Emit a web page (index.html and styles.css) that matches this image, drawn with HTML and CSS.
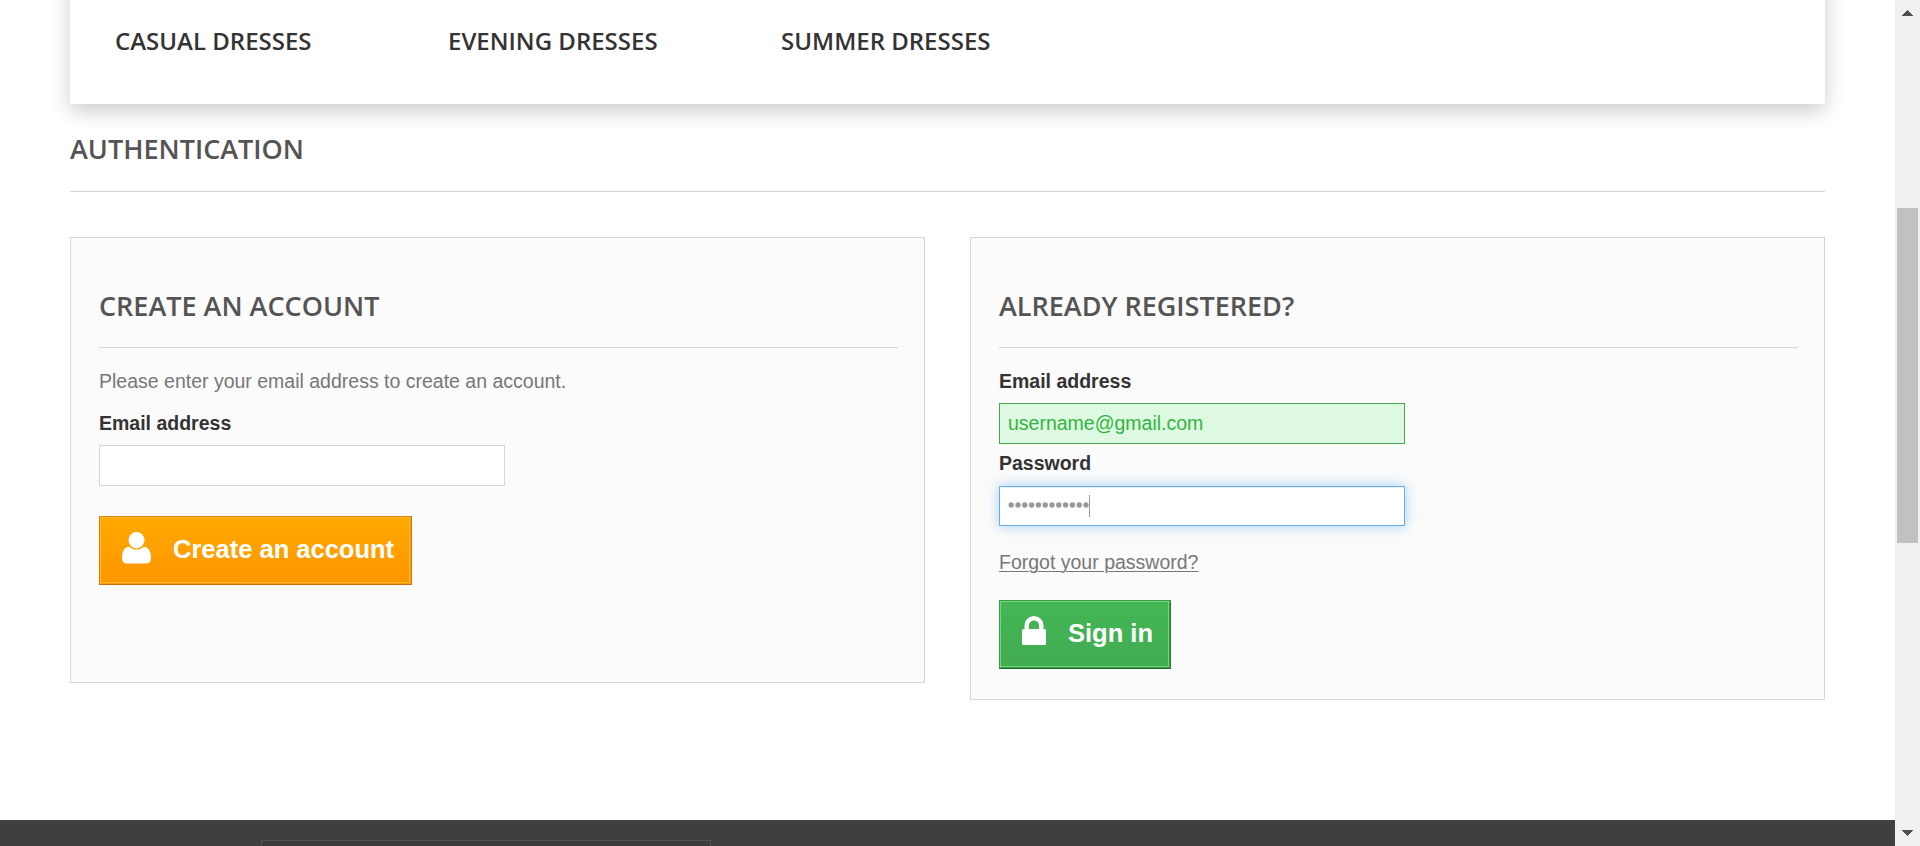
FILE: index.html
```html
<!DOCTYPE html>
<html lang="en">
<head>
<meta charset="utf-8">
<title>Login - My Store</title>
<link rel="stylesheet" href="styles.css">
</head>
<body>
<div class="viewport">
  <div class="page">
    <nav class="submenu">
      <a class="submenu-link">Casual Dresses</a>
      <a class="submenu-link">Evening Dresses</a>
      <a class="submenu-link">Summer Dresses</a>
    </nav>
    <main class="content">
      <h1 class="page-heading">Authentication</h1>
      <div class="columns">
        <section class="box box-create">
          <h3 class="box-heading">Create an account</h3>
          <p class="hint">Please enter your email address to create an account.</p>
          <label class="label">Email address</label>
          <div class="field"></div>
          <button class="button button-create">
            <svg class="icon-user" viewBox="0 0 29 32"><ellipse cx="14.5" cy="8.2" rx="8" ry="8.2"/><path d="M7.3 14.7C2 14.7 0 20 0 26.2 0 29.6 2 31.6 5 31.6H24c3 0 5-2 5-5.4 0-6.200-2-11.500-7.300-11.500-1.500 1.500-4 2.900-7.200 2.900s-5.700-1.400-7.200-2.900z"/></svg>
            <span class="button-text">Create an account</span>
          </button>
        </section>
        <section class="box box-login">
          <h3 class="box-heading">Already registered?</h3>
          <label class="label">Email address</label>
          <div class="field field-ok"><span class="email">username@gmail.com</span></div>
          <label class="label label-password">Password</label>
          <div class="field field-focus">
            <svg class="dots" viewBox="0 0 81 6"><circle cx="3.200" cy="3" r="2.700"/><circle cx="10" cy="3" r="2.700"/><circle cx="16.800" cy="3" r="2.700"/><circle cx="23.600" cy="3" r="2.700"/><circle cx="30.400" cy="3" r="2.700"/><circle cx="37.200" cy="3" r="2.700"/><circle cx="44" cy="3" r="2.700"/><circle cx="50.800" cy="3" r="2.700"/><circle cx="57.600" cy="3" r="2.700"/><circle cx="64.400" cy="3" r="2.700"/><circle cx="71.200" cy="3" r="2.700"/><circle cx="78" cy="3" r="2.700"/></svg>
            <span class="caret"></span>
          </div>
          <a class="forgot">Forgot your password?</a>
          <button class="button button-login">
            <svg class="icon-lock" viewBox="0 0 24 29"><path fill-rule="evenodd" d="M2.500 13V9.500a9.500 9.500 0 0 1 19 0V13H22.500a1.500 1.500 0 0 1 1.500 1.500V27.500a1.500 1.500 0 0 1-1.500 1.500H1.500A1.500 1.500 0 0 1 0 27.500V14.500A1.500 1.500 0 0 1 1.500 13zM7 13H17V9.500a5 5 0 0 0-10 0z"/></svg>
            <span class="button-text">Sign in</span>
          </button>
        </section>
      </div>
    </main>
    <footer class="footer"><div class="newsletter"></div></footer>
  </div>
  <div class="scrollbar">
    <svg class="arrow" viewBox="0 0 11 6" shape-rendering="crispEdges"><path d="M5 0h1v1h1v1h1v1h1v1h1v1h1v1H0V5h1V4h1V3h1V2h1V1h1z"/></svg>
    <div class="thumb"></div>
    <svg class="arrow arrow-down" viewBox="0 0 11 6" shape-rendering="crispEdges"><path d="M0 0h11v1h-1v1H9v1H8v1H7v1H6v1H5V5H4V4H3V3H2V2H1V1H0z"/></svg>
  </div>
</div>
</body>
</html>
```

FILE: styles.css
```css
* { box-sizing: border-box; }
body {
  margin: 0;
  background: #fff;
  font-family: "Liberation Sans", Arial, sans-serif;
  font-size: 19.5px;
  line-height: 27px;
  color: #777;
}
.viewport { display: flex; width: 1920px; height: 846px; overflow: hidden; }
.page { display: flex; flex-direction: column; width: 1895px; overflow: hidden; }

.submenu {
  display: grid;
  flex: none;
  grid-template-columns: 333px 333px 333px;
  height: 144px;
  margin: -40px 70px 0;
  padding: 64px 45px 0;
  background: #fff;
  box-shadow: 0 7.5px 19.5px rgba(0, 0, 0, 0.2);
}
.submenu-link {
  font: 600 24px/33px "Open Sans", sans-serif;
  color: #333;
  text-transform: uppercase;
  white-space: nowrap;
}

.content { height: 716px; padding: 0 70px; }
.page-heading, .box-heading {
  margin: 0;
  font: 600 27px/33px "Open Sans", sans-serif;
  color: #555454;
  text-transform: uppercase;
  border-bottom: 1px solid #d6d4d4;
}
.page-heading { height: 88px; padding-top: 28px; }
.columns {
  display: grid;
  grid-template-columns: 855px 855px;
  column-gap: 45px;
  align-items: start;
  margin-top: 45px;
}
.box {
  display: flex;
  flex-direction: column;
  align-items: flex-start;
  padding: 51px 26px 0 28px;
  background: #fbfbfb;
  border: 1px solid #d6d4d4;
}
.box-create { height: 446px; }
.box-login { height: 463px; }
.box-heading { align-self: stretch; height: 59px; margin-bottom: 20px; }
.hint { margin: 0 0 15px; }
.label { font-weight: 700; color: #333; }
.field {
  display: flex;
  align-items: center;
  width: 406px;
  height: 41px;
  margin-top: 8px;
  padding: 0 8px;
  background: #fff;
  border: 1px solid #d6d4d4;
}
.field-ok { color: #35b33f; background: #ddf9e1; border-color: #46a74e; }
.label-password { margin-top: 6px; }
.field-focus {
  height: 40px;
  margin-top: 9px;
  border-color: #66afe9;
  box-shadow: inset 0 1px 1px rgba(0, 0, 0, 0.075), 0 0 12px rgba(102, 175, 233, 0.6);
}
.dots { width: 81px; height: 6px; margin-top: -2px; fill: #999; }
.caret { width: 1px; height: 22px; background: #999; }
.forgot {
  margin-top: 23px;
  text-decoration: underline;
  text-decoration-thickness: 1px;
  text-underline-offset: 2px;
}

.button {
  display: flex;
  align-items: flex-start;
  height: 69px;
  padding: 0;
  border: 1px solid;
  font: 700 25.5px/30px "Liberation Sans", Arial, sans-serif;
  color: #fff;
  white-space: nowrap;
}
.button svg { flex: none; fill: #fff; }
.button-create {
  width: 313px;
  margin-top: 30px;
  padding-left: 22px;
  background: linear-gradient(#ffa900, #ff9600);
  border-color: #d98305 #d07d17 #cf6d12 #d98305;
  box-shadow: inset 1px 1px #ffb52c, inset -1px -1px #fb970c, inset -2px -2px #ffb52c;
}
.button-login {
  width: 172px;
  margin-top: 24px;
  padding-left: 22px;
  background: linear-gradient(#43b754, #42ac52);
  border-color: #399a49 #247f32 #1e6b2b #399a49;
  box-shadow: inset 1px 1px #74d578, inset -1px -1px #399a49, inset -2px -2px #74d578;
}
.icon-user { width: 29px; height: 32px; margin: 15px 22px 0 0; }
.icon-lock { width: 24px; height: 29px; margin: 15px 22px 0 0; }
.button-text { margin-top: 17px; }

.footer { height: 26px; padding: 20px 0 0 261px; background: #3f3f3f; }
.newsletter { width: 450px; height: 40px; border: 1px solid #515151; background: #3c3c3c; }

.scrollbar {
  display: flex;
  flex-direction: column;
  align-items: center;
  width: 25px;
  padding-top: 10px;
  background: #f0f0f0;
}
.arrow { width: 11px; height: 6px; fill: #505050; }
.thumb { width: 21px; height: 335px; margin-top: 192px; background: #c1c1c1; }
.arrow-down { margin-top: 287px; }
```
